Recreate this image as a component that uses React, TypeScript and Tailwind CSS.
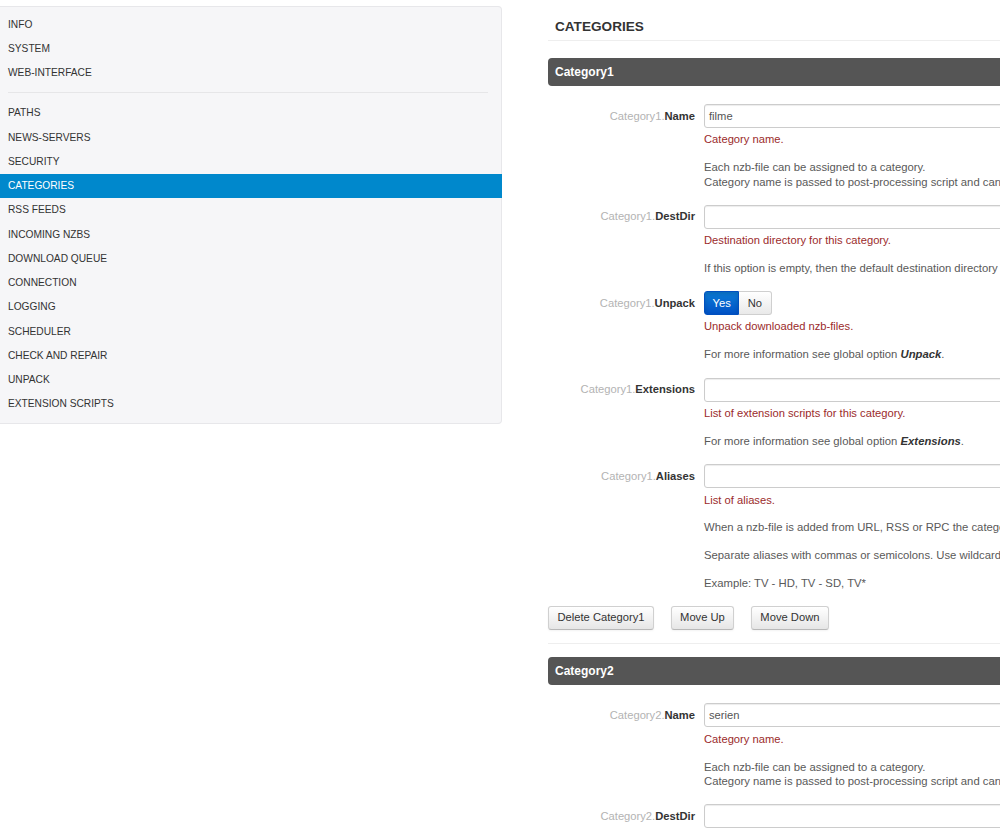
import type { ReactNode } from 'react';

const menuTop = ['Info', 'System', 'Web-Interface'];
const menuMain = [
  'Paths',
  'News-Servers',
  'Security',
  'Categories',
  'RSS Feeds',
  'Incoming NZBs',
  'Download Queue',
  'Connection',
  'Logging',
  'Scheduler',
  'Check and Repair',
  'Unpack',
  'Extension Scripts',
];

interface MenuItemProps {
  readonly label: string;
  readonly active?: boolean;
}

function MenuItem({ label, active }: MenuItemProps) {
  return (
    <div
      className={
        active
          ? 'mr-[-1px] flex h-[24.25px] items-center bg-[#0088cc] px-[8px] text-[10.2px] uppercase text-white'
          : 'flex h-[24.25px] items-center px-[8px] text-[10.2px] uppercase text-[#333]'
      }
    >
      {label}
    </div>
  );
}

function Sidebar() {
  return (
    <nav className="mt-[5.7px] w-[502px] shrink-0 self-start rounded-r-[4px] border border-l-0 border-[#e7e7ea] bg-[#f6f6f8] pt-[5.5px] pb-[6.5px]">
      {menuTop.map((m) => (
        <MenuItem key={m} label={m} />
      ))}
      <div className="mt-[7.5px] mb-[7.5px] ml-[8px] mr-[13px] h-px bg-[#e6e6e8]" />
      {menuMain.map((m) => (
        <MenuItem key={m} label={m} active={m === 'Categories'} />
      ))}
    </nav>
  );
}

interface FieldProps {
  readonly prefix: string;
  readonly name: string;
  readonly help: string;
  readonly children: ReactNode;
  readonly desc: ReactNode[];
}

function Field({ prefix, name, help, children, desc }: FieldProps) {
  return (
    <div className="flex">
      <div className="flex h-[24px] w-[147px] shrink-0 items-center justify-end text-[11.2px]">
        <span className="text-[#b3b3b3]">{prefix}.</span>
        <span className="font-bold text-[#333]">{name}</span>
      </div>
      <div className="ml-[9px] min-w-0 flex-1">
        {children}
        <p className="mt-[4.5px] text-[11.2px] leading-[14.4px] text-[#9b2b2b]">{help}</p>
        {desc.map((d, i) => (
          <p key={i} className="mt-[13.4px] whitespace-nowrap text-[11.3px] leading-[14.3px] text-[#595959]">
            {d}
          </p>
        ))}
      </div>
    </div>
  );
}

function TextInput({ value }: { readonly value?: string }) {
  return (
    <div className="flex h-[24px] w-full items-center rounded-[3px] border border-[#ccc] bg-white px-[4px] text-[11.2px] text-[#555] shadow-[inset_0_1px_1px_rgba(0,0,0,0.075)]">
      {value}
    </div>
  );
}

function YesNo() {
  return (
    <div className="flex h-[23.5px] text-[11.2px]">
      <span className="flex items-center rounded-l-[3px] border border-[#0050c0] bg-[linear-gradient(to_bottom,#0c7bd6,#0052c6)] px-[7.5px] text-white shadow-[inset_0_2px_4px_rgba(0,0,0,0.15)]">
        Yes
      </span>
      <span className="flex items-center rounded-r-[3px] border border-l-0 border-[#cfcfcf] bg-[linear-gradient(to_bottom,#ffffff,#e9e9e9)] px-[8.5px] text-[#333]">
        No
      </span>
    </div>
  );
}

function Button({ label }: { readonly label: string }) {
  return (
    <span className="flex h-[23.5px] items-center rounded-[3px] border border-[#d0d0d0] border-b-[#b8b8b8] bg-[linear-gradient(to_bottom,#ffffff,#e6e6e6)] px-[8.5px] text-[11.2px] text-[#333] shadow-[0_1px_2px_rgba(0,0,0,0.05)]">
      {label}
    </span>
  );
}

function Opt({ children }: { readonly children: ReactNode }) {
  return <b className="italic text-[#333]">{children}</b>;
}

function CategorySection({ n, name }: { readonly n: number; readonly name: string }) {
  const p = `Category${n}`;
  return (
    <section className="pt-[13.7px]">
      <div className="flex h-[28px] items-center rounded-[4px] bg-[#555] px-[7px] text-[12px] font-bold text-white">
        {p}
      </div>
      <div className="mt-[18px] flex flex-col gap-[16px]">
        <Field
          prefix={p}
          name="Name"
          help="Category name."
          desc={[
            <>
              Each nzb-file can be assigned to a category.
              <br />
              Category name is passed to post-processing script and can be used by the script to perform category specific processing.
            </>,
          ]}
        >
          <TextInput value={name} />
        </Field>
        <Field
          prefix={p}
          name="DestDir"
          help="Destination directory for this category."
          desc={[
            'If this option is empty, then the default destination directory (option DestDir) is used. In this case if the option AppendCategoryDir is active, the program creates a subdirectory with category name within destination directory.',
          ]}
        >
          <TextInput />
        </Field>
        <Field
          prefix={p}
          name="Unpack"
          help="Unpack downloaded nzb-files."
          desc={[
            <>
              For more information see global option <Opt>Unpack</Opt>.
            </>,
          ]}
        >
          <YesNo />
        </Field>
        <Field
          prefix={p}
          name="Extensions"
          help="List of extension scripts for this category."
          desc={[
            <>
              For more information see global option <Opt>Extensions</Opt>.
            </>,
          ]}
        >
          <TextInput />
        </Field>
        <Field
          prefix={p}
          name="Aliases"
          help="List of aliases."
          desc={[
            'When a nzb-file is added from URL, RSS or RPC the category name is searched in category names and aliases and the found category is assigned.',
            'Separate aliases with commas or semicolons. Use wildcard-characters * and ? for pattern matching.',
            'Example: TV - HD, TV - SD, TV*',
          ]}
        >
          <TextInput />
        </Field>
      </div>
      <div className="mt-[16px] flex gap-[16.5px]">
        <Button label={`Delete ${p}`} />
        <Button label="Move Up" />
        <Button label="Move Down" />
      </div>
      <div className="mt-[13px] h-px bg-[#eeeeee]" />
    </section>
  );
}

export default function App() {
  return (
    <div className="flex h-[832px] w-[1000px] overflow-hidden bg-white font-['Liberation_Sans',Arial,sans-serif] text-[#333]">
      <Sidebar />
      <main className="ml-[46px] w-[780px] shrink-0">
        <h2 className="border-b border-[#eeeeee] pt-[17px] pb-[3px] pl-[7px] text-[13.6px] leading-[20px] font-bold text-[#333]">
          CATEGORIES
        </h2>
        <div className="pt-[3.3px]">
          <CategorySection n={1} name="filme" />
          <CategorySection n={2} name="serien" />
        </div>
      </main>
    </div>
  );
}
